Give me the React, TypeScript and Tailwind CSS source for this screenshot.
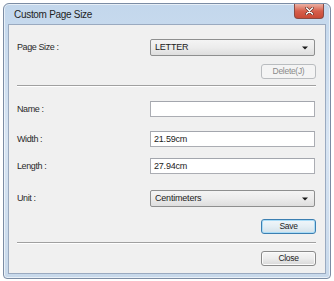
import React from "react";

const font = { fontFamily: '"Liberation Sans", Arial, sans-serif' };

function Arrow() {
  return (
    <svg width="6" height="4" viewBox="0 0 6 4" className="block">
      <path d="M0 0.5 H6 L3 3.5 Z" fill="#1a1a1a" />
    </svg>
  );
}

function Combo({ value }: { value: string }) {
  return (
    <div className="flex h-[17px] w-[165px] items-center justify-between rounded-[2px] border border-[#8e8f8f] bg-gradient-to-b from-[#f4f4f4] via-[#ececec] to-[#dedede] pl-[4px] pr-[6px]">
      <span className="text-[9px] leading-none tracking-[-0.2px] text-[#222]">{value}</span>
      <Arrow />
    </div>
  );
}

function Input({ value }: { value?: string }) {
  return (
    <div className="flex h-[16px] w-[165px] items-center border border-[#abadb3] border-t-[#a3a6ad] bg-white pl-[3px]">
      <span className="text-[9px] leading-none tracking-[-0.2px] text-[#222]">{value}</span>
    </div>
  );
}

function Btn({ label, kind }: { label: string; kind?: "disabled" | "default" }) {
  const cls =
    kind === "disabled"
      ? "border-[#b9bcbf] bg-[#f4f4f4] text-[#8a8a8a]"
      : kind === "default"
      ? "border-[#3c7fb1] bg-gradient-to-b from-[#f0f6fa] via-[#e4eef4] to-[#d3e1ea] text-[#222] shadow-[inset_0_0_0_1px_#a9dcf7]"
      : "border-[#8a8a8a] bg-gradient-to-b from-[#f6f6f6] via-[#ececec] to-[#d8d8d8] text-[#222] shadow-[inset_0_0_0_1px_#fbfbfb]";
  return (
    <div className={`flex h-[15px] w-[55px] items-center justify-center rounded-[3px] border ${cls}`}>
      <span className="text-[8.5px] leading-none tracking-[-0.3px]">{label}</span>
    </div>
  );
}

function Row({ label, children, className }: { label: string; children: React.ReactNode; className: string }) {
  return (
    <div className={`flex items-center ${className}`}>
      <div className="w-[133px] text-[9px] leading-none tracking-[-0.4px] text-[#2a2a2a]">{label}</div>
      {children}
    </div>
  );
}

function Sep({ className }: { className: string }) {
  return <div className={`h-[2px] border-t border-[#a0a0a0] border-b border-b-white ${className}`} />;
}

export default function App() {
  return (
    <div className="h-[281px] w-[334px] bg-white pl-[3px] pt-[3px]" style={font}>
      <div className="flex h-[276px] w-[328px] flex-col rounded-t-[6px] rounded-b-[4px] border border-[#7b8ca4] bg-gradient-to-b from-[#c3d7ec] via-[#d8e5f3] to-[#c8d9eb] px-[4px] pb-[4px] shadow-[inset_0_0_0_1px_rgba(255,255,255,0.6)]">
        <div className="flex h-[20px] items-start justify-between">
          <span className="pl-[6px] pt-[6px] text-[10px] leading-none tracking-[-0.3px] text-[#1e1e1e]">Custom Page Size</span>
          <div className="mr-[2px] flex h-[15px] w-[30px] items-center justify-center rounded-b-[4px] border border-t-0 border-[#8a4a42] bg-gradient-to-b from-[#eab0a4] via-[#d65f4c] to-[#c94a36]">
            <svg width="9" height="8" viewBox="0 0 9 8">
              <path d="M1.5 1 L7.5 7 M7.5 1 L1.5 7" stroke="#5a2a22" strokeWidth="2.6" strokeLinecap="round" />
              <path d="M1.5 1 L7.5 7 M7.5 1 L1.5 7" stroke="#ffffff" strokeWidth="1.5" strokeLinecap="round" />
            </svg>
          </div>
        </div>
        <div className="flex flex-1 flex-col border border-[#9aaac0] bg-[#f0f0f0] pl-[8px] pr-[9px]">
          <Row label="Page Size :" className="mt-[14px]">
            <Combo value="LETTER" />
          </Row>
          <div className="mt-[8px] flex justify-end">
            <Btn label="Delete(J)" kind="disabled" />
          </div>
          <Sep className="mt-[6px]" />
          <Row label="Name :" className="mt-[14px]">
            <Input />
          </Row>
          <Row label="Width :" className="mt-[14px]">
            <Input value="21.59cm" />
          </Row>
          <Row label="Length :" className="mt-[11px]">
            <Input value="27.94cm" />
          </Row>
          <Row label="Unit :" className="mt-[16px]">
            <Combo value="Centimeters" />
          </Row>
          <div className="mt-[12px] flex justify-end">
            <Btn label="Save" kind="default" />
          </div>
          <Sep className="mt-[8px]" />
          <div className="mt-[7px] flex justify-end">
            <Btn label="Close" />
          </div>
        </div>
      </div>
    </div>
  );
}
